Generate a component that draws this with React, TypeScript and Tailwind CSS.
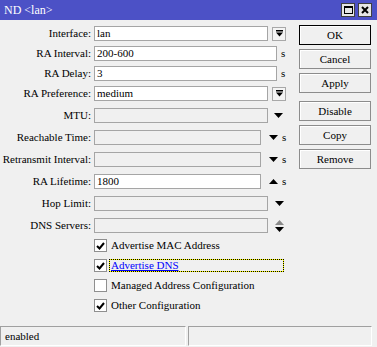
import React from "react";

const DropBtn = () => (
  <div className="ml-[4px] w-[14px] h-[14px] border border-[#a8a8a8] bg-[#f4f4f4] flex items-center justify-center">
    <svg width="7" height="7" viewBox="0 0 7 7">
      <rect x="0" y="0" width="7" height="1.5" fill="#000" />
      <polygon points="0,2.5 7,2.5 3.5,6.5" fill="#000" />
    </svg>
  </div>
);

const Down = ({ gray }: { gray?: boolean }) => (
  <svg width="9" height="5" viewBox="0 0 9 5">
    <polygon points="0,0 9,0 4.5,5" fill={gray ? "#8a8a8a" : "#000"} />
  </svg>
);
const Up = ({ gray }: { gray?: boolean }) => (
  <svg width="9" height="5" viewBox="0 0 9 5">
    <polygon points="0,5 9,5 4.5,0" fill={gray ? "#8a8a8a" : "#000"} />
  </svg>
);

const Field = ({ w, value, disabled }: { w: string; value?: string; disabled?: boolean }) => (
  <div
    className={`${w} h-[15px] border border-[#a5a5a5] ${disabled ? "bg-[#f0f0f0]" : "bg-white"} flex items-center pl-[2px] leading-none`}
  >
    {value}
  </div>
);

const Row = ({ label, mt, children }: { label: string; mt: string; children: React.ReactNode }) => (
  <div className={`flex items-center h-[15px] ${mt}`}>
    <div className="w-[91px] text-right whitespace-nowrap leading-none">{label}</div>
    <div className="ml-[3px] flex items-center">{children}</div>
  </div>
);

const Unit = () => <span className="ml-[4px] leading-none">s</span>;

const Check = ({ checked }: { checked: boolean }) => (
  <div className="w-[13px] h-[13px] border border-[#8f8f8f] bg-white flex items-center justify-center">
    {checked && (
      <svg width="9" height="8" viewBox="0 0 9 8">
        <polyline points="1,4 3.5,6.5 8,1" fill="none" stroke="#000" strokeWidth="2" />
      </svg>
    )}
  </div>
);

const CheckRow = ({ label, checked, mt, focus }: { label: string; checked: boolean; mt: string; focus?: boolean }) => (
  <div className={`flex items-center h-[13px] ${mt} pl-[94px]`}>
    <Check checked={checked} />
    {focus ? (
      <div className="ml-[2px] w-[175px] h-[13px] bg-[#ffff00]">
        <div className="w-full h-full border border-dotted border-black bg-[#f0f0f0] bg-clip-padding flex items-center pl-[1px] text-[#0000ff] underline leading-none">
          {label}
        </div>
      </div>
    ) : (
      <span className="ml-[4px] leading-none">{label}</span>
    )}
  </div>
);

const Btn = ({ label, mt, def }: { label: string; mt: string; def?: boolean }) => (
  <div
    className={`${mt} w-[72px] h-[20px] border ${def ? "border-black" : "border-[#8c8c8c]"} bg-[#f0f0f0] flex items-center justify-center leading-none shadow-[inset_1px_1px_0_#ffffff]`}
  >
    {label}
  </div>
);

export default function App() {
  return (
    <div className="w-[377px] h-[347px] bg-[#f0f0f0] flex flex-col text-[11px] text-black overflow-hidden font-['Liberation_Serif',serif]">
      <div className="h-[20px] bg-[#4c51c6] flex items-center pl-[4px] pr-[5px] text-white text-[12px]">
        <span className="leading-none">ND &lt;lan&gt;</span>
        <div className="ml-auto flex gap-[3px]">
          <div className="w-[14px] h-[14px] bg-[#e6e6e6] border border-[#404040] flex items-center justify-center">
            <div className="w-[9px] h-[8px] border border-black border-t-2" />
          </div>
          <div className="w-[14px] h-[14px] bg-[#e6e6e6] border border-[#404040] flex items-center justify-center">
            <svg width="8" height="8" viewBox="0 0 8 8">
              <path d="M1 1 L7 7 M7 1 L1 7" stroke="#000" strokeWidth="2" />
            </svg>
          </div>
        </div>
      </div>
      <div className="flex flex-1">
        <div className="w-[298px] flex flex-col pt-[6px]">
          <Row label="Interface:" mt="mt-0">
            <Field w="w-[174px]" value="lan" />
            <DropBtn />
          </Row>
          <Row label="RA Interval:" mt="mt-[5px]">
            <Field w="w-[183px]" value="200-600" />
            <Unit />
          </Row>
          <Row label="RA Delay:" mt="mt-[5px]">
            <Field w="w-[183px]" value="3" />
            <Unit />
          </Row>
          <Row label="RA Preference:" mt="mt-[5px]">
            <Field w="w-[174px]" value="medium" />
            <DropBtn />
          </Row>
          <Row label="MTU:" mt="mt-[7px]">
            <Field w="w-[174px]" disabled />
            <span className="ml-[6px] flex"><Down /></span>
          </Row>
          <Row label="Reachable Time:" mt="mt-[7px]">
            <Field w="w-[167px]" disabled />
            <span className="ml-[8px] flex"><Down /></span>
            <Unit />
          </Row>
          <Row label="Retransmit Interval:" mt="mt-[7px]">
            <Field w="w-[167px]" disabled />
            <span className="ml-[8px] flex"><Down /></span>
            <Unit />
          </Row>
          <Row label="RA Lifetime:" mt="mt-[7px]">
            <Field w="w-[167px]" value="1800" />
            <span className="ml-[8px] flex"><Up /></span>
            <Unit />
          </Row>
          <Row label="Hop Limit:" mt="mt-[7px]">
            <Field w="w-[174px]" disabled />
            <span className="ml-[7px] flex"><Down /></span>
          </Row>
          <Row label="DNS Servers:" mt="mt-[7px]">
            <Field w="w-[174px]" disabled />
            <span className="ml-[7px] flex flex-col gap-[2px]">
              <Up gray />
              <Down />
            </span>
          </Row>
          <CheckRow label="Advertise MAC Address" checked mt="mt-[6px]" />
          <CheckRow label="Advertise DNS" checked mt="mt-[7px]" focus />
          <CheckRow label="Managed Address Configuration" checked={false} mt="mt-[7px]" />
          <CheckRow label="Other Configuration" checked mt="mt-[7px]" />
        </div>
        <div className="flex flex-col pt-[5px] pl-[1px]">
          <Btn label="OK" mt="mt-0" def />
          <Btn label="Cancel" mt="mt-[4px]" />
          <Btn label="Apply" mt="mt-[4px]" />
          <Btn label="Disable" mt="mt-[8px]" />
          <Btn label="Copy" mt="mt-[4px]" />
          <Btn label="Remove" mt="mt-[4px]" />
        </div>
      </div>
      <div className="h-[20px] flex gap-[2px] mb-[1px]">
        <div className="w-[186px] border-t border-l border-[#a0a0a0] border-b-white border-r-white border-b border-r flex items-center pl-[4px] leading-none">
          enabled
        </div>
        <div className="w-[184px] border-t border-l border-[#a0a0a0] border-b-white border-r-white border-b border-r" />
      </div>
    </div>
  );
}
